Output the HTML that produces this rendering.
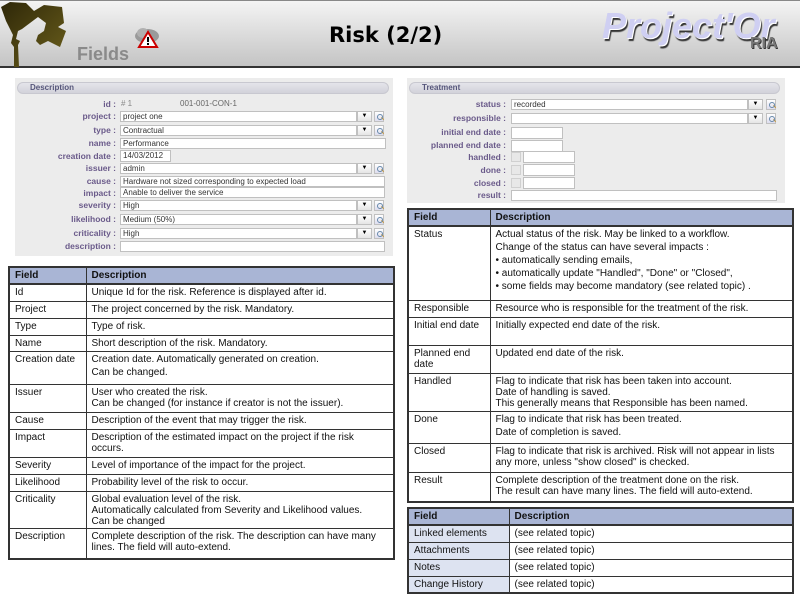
<!DOCTYPE html>
<html><head><meta charset="utf-8"><style>
*{margin:0;padding:0;box-sizing:border-box}
body{width:800px;height:600px;background:#fff;position:relative;overflow:hidden;font-family:"Liberation Sans","DejaVu Sans",sans-serif}
.a{position:absolute}
#hdr{left:0;top:0;width:800px;height:68px;background:linear-gradient(#f4f4f4,#c4c4c4);border-top:1px solid #888;border-bottom:2px solid #333}
.panel{background:#ececec}
.bar{height:12px;border-radius:6px;background:linear-gradient(#e4e4ea,#d2d2da);border:1px solid #c8c8d0;font-size:8px;font-weight:bold;color:#55557a;padding-left:12px;line-height:10px}
.lbl{font-size:8.5px;font-weight:bold;color:#6a5a8a;text-align:right;white-space:nowrap;line-height:10px}
.inp{background:#fff;border:1px solid #c0c0c0;height:11px;font-size:8px;line-height:9px;padding-left:2px;color:#333;white-space:nowrap;overflow:hidden}
.dd{background:linear-gradient(#fff,#e4e4e4);border:1px solid #c0c0c0;height:11px;width:15px;font-size:6px;text-align:center;line-height:9px}
.sr{background:linear-gradient(#fff,#dde);border:1px solid #c0c0c0;height:11px;width:10px}
.sr:after{content:"";position:absolute;left:2px;top:2px;width:4px;height:4px;border:1px solid #68a;border-radius:50%}
.sr:before{content:"";position:absolute;left:6px;top:6px;width:3px;height:1px;background:#c80;transform:rotate(45deg)}
.cb{background:#e8e8e8;border:1px solid #d0d0d0;width:10px;height:10px}
table{border-collapse:collapse;position:absolute;font-size:10px;color:#111;border:2px solid #333}
td{border:1px solid #333;vertical-align:top;padding:2px 5px 0 5px;line-height:11px}
th{background:#a9b5d5;border:1px solid #333;border-bottom:2px solid #333;text-align:left;font-weight:bold;padding:0 5px;font-size:10px;height:17px}
.f{background:#dde3f1}
p{margin-bottom:2px}
</style></head><body>
<div id="hdr" class="a">
<svg class="a" style="left:0;top:0" width="70" height="66" viewBox="0 0 70 66">
<defs><linearGradient id="g" x1="0" y1="0" x2="1" y2="1"><stop offset="0" stop-color="#2e2708"/><stop offset="1" stop-color="#6b5f1c"/></linearGradient></defs>
<path d="M1 6 L10 1 L26 2 L34 10 L44 4 L62 6 L64 22 L58 26 L66 30 L60 46 L48 40 L40 44 L36 40 L38 34 L44 30 L46 22 L38 16 L30 22 L22 28 L18 30 L16 38 L20 40 L18 44 L19 66 L14 66 L14 46 L11 42 L13 34 L10 28 L6 20 Z" fill="url(#g)"/>
</svg>
<div class="a" style="left:77px;top:43px;font-size:18px;font-weight:bold;color:#8a8a8a">Fields</div>
<svg class="a" style="left:133px;top:25px" width="30" height="22" viewBox="0 0 30 22">
<ellipse cx="14" cy="10" rx="12" ry="7" fill="#9a9a9a"/><ellipse cx="10" cy="7" rx="6" ry="5" fill="#b0b0b0"/>
<path d="M15 6 L24 21 L6 21 Z" fill="#fff" stroke="#c00" stroke-width="2"/><rect x="14" y="11" width="2" height="5" fill="#000"/><rect x="14" y="17" width="2" height="2" fill="#000"/>
</svg>
<div class="a" style="left:329px;top:22px;font-size:21px;font-weight:bold;color:#000;font-family:'DejaVu Sans',sans-serif">Risk (2/2)</div>
<div class="a" style="left:602px;top:4px;font-size:36px;font-weight:bold;font-style:italic;color:#cfcff2;text-shadow:1px 1px 0 #fff,2px 3px 1px #333">Project'Or</div>
<div class="a" style="left:750px;top:34px;font-size:16px;font-weight:bold;color:#777;text-shadow:1px 1px 0 #333">RIA</div>
</div>

<div class="a panel" style="left:15px;top:78px;width:378px;height:178px"></div>
<div class="a bar" style="left:17px;top:82px;width:372px">Description</div>
<div class="a lbl" style="left:20px;top:99px;width:96px">id :</div>
<div class="a" style="left:121px;top:99px;font-size:8px;color:#888">#&nbsp;1</div>
<div class="a" style="left:180px;top:99px;font-size:8px;color:#666">001-001-CON-1</div>

<div class="a lbl" style="left:20px;top:111px;width:96px">project :</div>
<div class="a inp" style="left:120px;top:111px;width:237px">project one</div><div class="a dd" style="left:357px;top:111px">▼</div><div class="a sr" style="left:374px;top:111px"></div>
<div class="a lbl" style="left:20px;top:125px;width:96px">type :</div>
<div class="a inp" style="left:120px;top:125px;width:237px">Contractual</div><div class="a dd" style="left:357px;top:125px">▼</div><div class="a sr" style="left:374px;top:125px"></div>
<div class="a lbl" style="left:20px;top:138px;width:96px">name :</div>
<div class="a inp" style="left:120px;top:138px;width:266px">Performance</div>
<div class="a lbl" style="left:20px;top:151px;width:96px">creation date :</div>
<div class="a inp" style="left:120px;top:150px;width:51px;height:12px">14/03/2012</div>
<div class="a lbl" style="left:20px;top:163px;width:96px">issuer :</div>
<div class="a inp" style="left:120px;top:163px;width:237px">admin</div><div class="a dd" style="left:357px;top:163px">▼</div><div class="a sr" style="left:374px;top:163px"></div>
<div class="a lbl" style="left:20px;top:176px;width:96px">cause :</div>
<div class="a inp" style="left:120px;top:176px;width:265px">Hardware not sized corresponding to expected load</div>
<div class="a lbl" style="left:20px;top:188px;width:96px">impact :</div>
<div class="a inp" style="left:120px;top:187px;width:265px">Anable to deliver the service</div>
<div class="a lbl" style="left:20px;top:200px;width:96px">severity :</div>
<div class="a inp" style="left:120px;top:200px;width:237px">High</div><div class="a dd" style="left:357px;top:200px">▼</div><div class="a sr" style="left:374px;top:200px"></div>
<div class="a lbl" style="left:20px;top:214px;width:96px">likelihood :</div>
<div class="a inp" style="left:120px;top:214px;width:237px">Medium (50%)</div><div class="a dd" style="left:357px;top:214px">▼</div><div class="a sr" style="left:374px;top:214px"></div>
<div class="a lbl" style="left:20px;top:228px;width:96px">criticality :</div>
<div class="a inp" style="left:120px;top:228px;width:237px">High</div><div class="a dd" style="left:357px;top:228px">▼</div><div class="a sr" style="left:374px;top:228px"></div>
<div class="a lbl" style="left:20px;top:241px;width:96px">description :</div>
<div class="a inp" style="left:120px;top:241px;width:265px"></div>

<div class="a panel" style="left:407px;top:78px;width:378px;height:125px"></div>
<div class="a bar" style="left:409px;top:82px;width:371px">Treatment</div>
<div class="a lbl" style="left:407px;top:99px;width:99px">status :</div>
<div class="a inp" style="left:511px;top:99px;width:237px">recorded</div><div class="a dd" style="left:748px;top:99px">▼</div><div class="a sr" style="left:766px;top:99px"></div>
<div class="a lbl" style="left:407px;top:113px;width:99px">responsible :</div>
<div class="a inp" style="left:511px;top:113px;width:237px"></div><div class="a dd" style="left:748px;top:113px">▼</div><div class="a sr" style="left:766px;top:113px"></div>
<div class="a lbl" style="left:407px;top:127px;width:99px">initial end date :</div>
<div class="a inp" style="left:511px;top:127px;width:52px;height:12px"></div>
<div class="a lbl" style="left:407px;top:140px;width:99px">planned end date :</div>
<div class="a inp" style="left:511px;top:140px;width:52px;height:12px"></div>
<div class="a lbl" style="left:407px;top:152px;width:99px">handled :</div>
<div class="a cb" style="left:511px;top:152px"></div><div class="a inp" style="left:523px;top:151px;width:52px;height:12px"></div>
<div class="a lbl" style="left:407px;top:165px;width:99px">done :</div>
<div class="a cb" style="left:511px;top:165px"></div><div class="a inp" style="left:523px;top:164px;width:52px;height:12px"></div>
<div class="a lbl" style="left:407px;top:178px;width:99px">closed :</div>
<div class="a cb" style="left:511px;top:178px"></div><div class="a inp" style="left:523px;top:177px;width:52px;height:12px"></div>
<div class="a lbl" style="left:407px;top:190px;width:99px">result :</div>
<div class="a inp" style="left:511px;top:190px;width:266px"></div>

<table style="left:8px;top:266px;width:387px">
<tr><th style="width:77px">Field</th><th>Description</th></tr>
<tr style="height:17px"><td>Id</td><td>Unique Id for the risk. Reference is displayed after id.</td></tr>
<tr style="height:17px"><td>Project</td><td>The project concerned by the risk. Mandatory.</td></tr>
<tr style="height:17px"><td>Type</td><td>Type of risk.</td></tr>
<tr style="height:16px"><td>Name</td><td>Short description of the risk. Mandatory.</td></tr>
<tr style="height:33px"><td>Creation date</td><td><p>Creation date. Automatically generated on creation.</p>Can be changed.</td></tr>
<tr style="height:28px"><td>Issuer</td><td>User who created the risk.<br>Can be changed (for instance if creator is not the issuer).</td></tr>
<tr style="height:17px"><td>Cause</td><td>Description of the event that may trigger the risk.</td></tr>
<tr style="height:28px"><td>Impact</td><td>Description of the estimated impact on the project if the risk occurs.</td></tr>
<tr style="height:17px"><td>Severity</td><td>Level of importance of the impact for the project.</td></tr>
<tr style="height:17px"><td>Likelihood</td><td>Probability level of the risk to occur.</td></tr>
<tr style="height:37px"><td>Criticality</td><td>Global evaluation level of the risk.<br>Automatically calculated from Severity and Likelihood values.<br>Can be changed</td></tr>
<tr style="height:31px"><td>Description</td><td>Complete description of the risk. The description can have many lines. The field will auto-extend.</td></tr>
</table>

<table style="left:407px;top:208px;width:387px">
<tr><th style="width:82px">Field</th><th>Description</th></tr>
<tr style="height:74px"><td>Status</td><td><p>Actual status of the risk. May be linked to a workflow.</p><p>Change of the status can have several impacts :</p><p>• automatically sending emails,</p><p>• automatically update "Handled", "Done" or "Closed",</p>• some fields may become mandatory (see related topic) .</td></tr>
<tr style="height:17px"><td>Responsible</td><td>Resource who is responsible for the treatment of the risk.</td></tr>
<tr style="height:28px"><td>Initial end date</td><td>Initially expected end date of the risk.</td></tr>
<tr style="height:28px"><td>Planned end date</td><td>Updated end date of the risk.</td></tr>
<tr style="height:38px"><td>Handled</td><td>Flag to indicate that risk has been taken into account.<br>Date of handling is saved.<br>This generally means that Responsible has been named.</td></tr>
<tr style="height:32px"><td>Done</td><td><p>Flag to indicate that risk has been treated.</p>Date of completion is saved.</td></tr>
<tr style="height:29px"><td>Closed</td><td>Flag to indicate that risk is archived. Risk will not appear in lists any more, unless "show closed" is checked.</td></tr>
<tr style="height:30px"><td>Result</td><td>Complete description of the treatment done on the risk.<br>The result can have many lines. The field will auto-extend.</td></tr>
</table>

<table style="left:407px;top:507px;width:387px">
<tr><th style="width:101px">Field</th><th>Description</th></tr>
<tr style="height:17px"><td class="f">Linked elements</td><td>(see related topic)</td></tr>
<tr style="height:17px"><td class="f">Attachments</td><td>(see related topic)</td></tr>
<tr style="height:17px"><td class="f">Notes</td><td>(see related topic)</td></tr>
<tr style="height:17px"><td class="f">Change History</td><td>(see related topic)</td></tr>
</table>
</body></html>
